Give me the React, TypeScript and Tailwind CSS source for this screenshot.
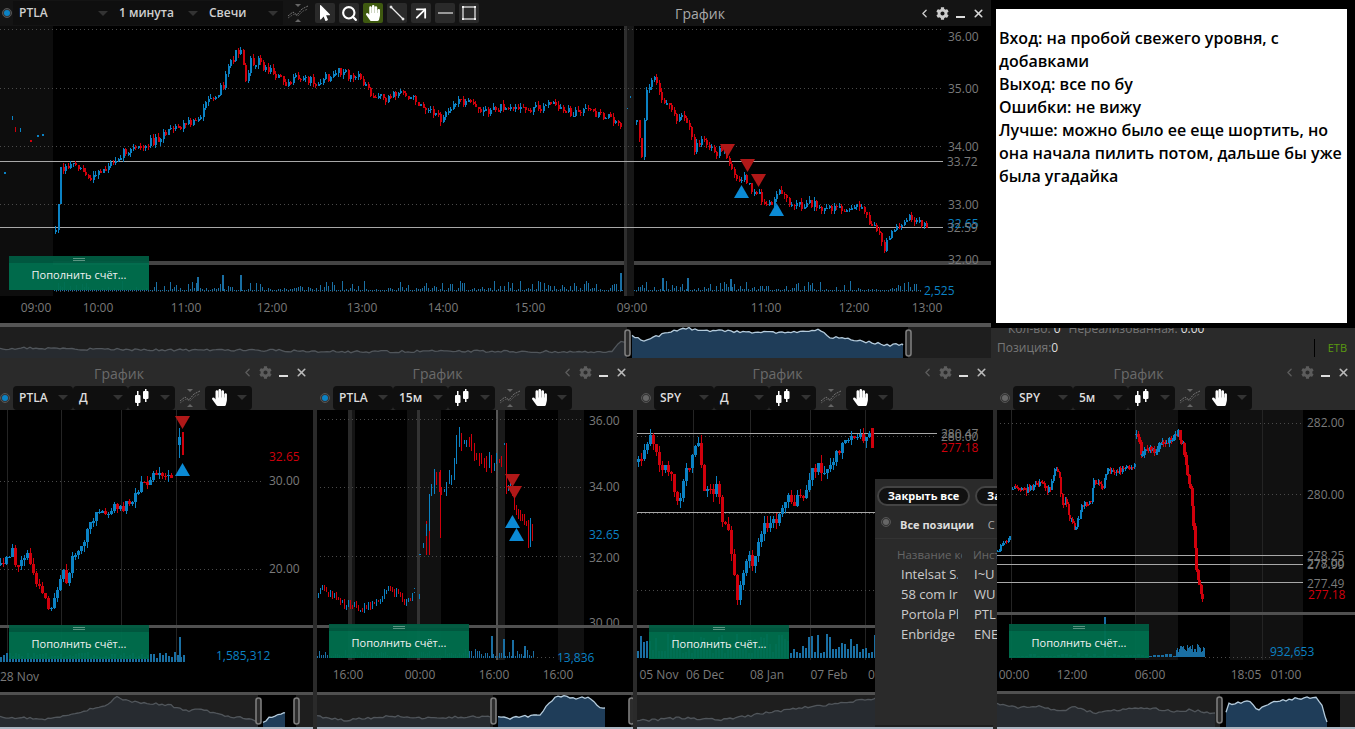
import React from 'react';
import { ArrowUpRight, ChevronLeft, Search, X } from 'lucide-react';
import { FaCog, FaHandPaper, FaMousePointer } from 'react-icons/fa';

type Pt = [number, number];

const BLUE = '#0b82c4';
const RED = '#d0000c';
const FONT = '"Open Sans", "Noto Sans", sans-serif';

function rng(seed: number) {
  let s = seed;
  return () => {
    s = (s * 1664525 + 1013904223) % 4294967296;
    return s / 4294967296;
  };
}

function interp(pts: Pt[], x: number) {
  for (let i = 1; i < pts.length; i++) {
    if (x <= pts[i][0]) {
      const [x0, y0] = pts[i - 1];
      const [x1, y1] = pts[i];
      return y0 + ((y1 - y0) * (x - x0)) / Math.max(x1 - x0, 0.01);
    }
  }
  return pts[pts.length - 1][1];
}

// roughen a navigator line so it looks like price data
function jag(pts: Pt[], seed: number): Pt[] {
  if (pts.length === 0) return pts;
  const r = rng(seed);
  const out: Pt[] = [];
  for (let x = pts[0][0]; x < pts[pts.length - 1][0]; x += 3) {
    out.push([x, interp(pts, x) + (r() - 0.5) * 2.4]);
  }
  out.push(pts[pts.length - 1]);
  return out;
}

function Candles({ pts, step, w, noise, wick, seed }: { pts: Pt[]; step: number; w: number; noise: number; wick: number; seed: number }) {
  const r = rng(seed);
  const out: React.ReactNode[] = [];
  let open = pts[0][1];
  for (let x = pts[0][0]; x <= pts[pts.length - 1][0]; x += step) {
    const close = interp(pts, x) + (r() - 0.5) * noise;
    const top = Math.min(open, close);
    const bot = Math.max(open, close);
    const hi = top - r() * wick;
    const lo = bot + r() * wick;
    const c = close < open ? BLUE : RED;
    const px = Math.round(x);
    out.push(
      <g key={x} fill={c}>
        <rect x={px} y={hi} width={1} height={lo - hi} />
        <rect x={px - Math.floor((w - 1) / 2)} y={top} width={w} height={Math.max(bot - top, 1.5)} />
      </g>
    );
    open = close;
  }
  return <g shapeRendering="crispEdges">{out}</g>;
}

function Volume({ from, to, step, base, max, seed, min = 1, pow = 2, spikes = [] }: { from: number; to: number; step: number; base: number; max: number; seed: number; min?: number; pow?: number; spikes?: Pt[] }) {
  const r = rng(seed);
  const out: React.ReactNode[] = [];
  const w = step > 1.5 ? Math.max(Math.round(step) - 1, 1) : 1;
  for (let x = from; x <= to; x += step) {
    const h = min + Math.pow(r(), pow) * max;
    out.push(<rect key={x} x={Math.round(x)} y={base - h} width={w} height={h} fill="#1a6fa3" />);
  }
  spikes.forEach(([x, h]) => out.push(<rect key={`s${x}`} x={x} y={base - h} width={2} height={h} fill="#1a6fa3" />));
  return <g shapeRendering="crispEdges">{out}</g>;
}

function Tri({ x, y, up }: { x: number; y: number; up?: boolean }) {
  const p = up ? `${x},${y} ${x + 15},${y} ${x + 7.5},${y - 13}` : `${x},${y} ${x + 15},${y} ${x + 7.5},${y + 13}`;
  return <polygon points={p} fill={up ? '#0b8ad4' : '#b01818'} />;
}

function HLine({ y, x1, x2, dotted }: { y: number; x1: number; x2: number; dotted?: boolean }) {
  return dotted ? (
    <line x1={x1} x2={x2} y1={y + 0.5} y2={y + 0.5} stroke="#4a4a4a" strokeDasharray="1 3" />
  ) : (
    <line x1={x1} x2={x2} y1={y + 0.5} y2={y + 0.5} stroke="#a8a8a8" />
  );
}

function VLines({ xs, y1, y2 }: { xs: number[]; y1: number; y2: number }) {
  return (
    <g>
      {xs.map((x) => (
        <line key={x} x1={x + 0.5} x2={x + 0.5} y1={y1} y2={y2} stroke="#242424" />
      ))}
    </g>
  );
}

function Label({ x, y, t, c = '#7a7a7a', s = 12, a }: { x: number; y: number; t: string; c?: string; s?: number; a?: 'middle' }) {
  return (
    <text x={x} y={y + 4} fill={c} fontSize={s} textAnchor={a} fontFamily={FONT}>
      {t}
    </text>
  );
}

function Plot({ left, top, width, height, spill, children }: { left: number; top: number; width: number; height: number; spill?: boolean; children: React.ReactNode }) {
  return (
    <svg width={width} height={height} viewBox={`${left} ${top} ${width} ${height}`} className={`block bg-black shrink-0 ${spill ? 'relative z-[1] overflow-visible' : ''}`}>
      {children}
    </svg>
  );
}

function Handle({ x, y, h = 26 }: { x: number; y: number; h?: number }) {
  return <rect x={x + 1} y={y} width={5} height={h} rx={2.5} fill="#2c2c2c" stroke="#7d7d7d" strokeWidth={1.6} />;
}

function Navigator({ left, top, width, height, dim, bright, handles, windowFrom, windowTo }: { left: number; top: number; width: number; height: number; dim: Pt[]; bright: Pt[]; handles: number[]; windowFrom: number; windowTo: number }) {
  const bottom = top + height;
  const d = jag(dim, left + 3);
  const b = jag(bright, left + 5);
  const str = (p: Pt[]) => p.map(([x, y]) => `${x},${y}`).join(' ');
  const area = (p: Pt[]) => (p.length ? `${p[0][0]},${bottom} ${str(p)} ${p[p.length - 1][0]},${bottom}` : '');
  return (
    <svg width={width} height={height} viewBox={`${left} ${top} ${width} ${height}`} className="block bg-[#1e1e1e] shrink-0">
      <rect x={windowFrom} y={top} width={windowTo - windowFrom} height={height} fill="#000" />
      <polygon points={area(d)} fill="#272b30" />
      <polyline points={str(d)} fill="none" stroke="#51565b" strokeWidth={1.3} />
      {b.length > 0 && <polygon points={area(b)} fill="#1f3d59" />}
      {b.length > 0 && <polyline points={str(b)} fill="none" stroke="#b4cbdc" strokeWidth={1.3} />}
      {handles.map((x) => (
        <Handle key={x} x={x} y={top + 3} />
      ))}
    </svg>
  );
}

function Caret() {
  return <span className="w-0 h-0 border-l-[5px] border-r-[5px] border-t-[5px] border-l-transparent border-r-transparent border-t-[#333333]" />;
}

function Dot({ active }: { active?: boolean }) {
  return (
    <span className="w-[10px] h-[10px] rounded-full border border-[#555555] bg-[#333333] flex items-center justify-center shrink-0">
      <span className={`w-[6px] h-[6px] rounded-full ${active ? 'bg-[#0b82c4]' : 'bg-[#666666]'}`} />
    </span>
  );
}

function CandleIcon() {
  return (
    <svg width="20" height="18" viewBox="0 0 20 18" fill="#fff">
      <rect x="3" y="2" width="1.5" height="15" />
      <rect x="1" y="6" width="5.5" height="8" rx="1" />
      <rect x="11" y="0" width="1.5" height="13" />
      <rect x="9" y="2" width="5.5" height="8" rx="1" />
    </svg>
  );
}

function TrendIcon() {
  return (
    <svg width="20" height="20" viewBox="0 0 20 20" className="shrink-0">
      <polyline points="0,13 5,9 9,12 14,6 20,3" fill="none" stroke="#777" strokeWidth="1" strokeDasharray="2 1" />
      <polyline points="0,15 6,11 10,13 15,8 20,6" fill="none" stroke="#555" strokeWidth="1" strokeDasharray="2 1" />
      <polygon points="7,1 13,1 10,4" fill="#666" />
      <polygon points="7,19 13,19 10,16" fill="#666" />
    </svg>
  );
}

function Select({ width, children }: { width: number; children: React.ReactNode }) {
  return (
    <div style={{ width }} className="h-[24px] rounded-[4px] bg-[#0f0f0f] flex items-center justify-between pl-[6px] pr-[5px] shrink-0">
      {children}
      <Caret />
    </div>
  );
}

function WindowButtons({ bright }: { bright?: boolean }) {
  const c = bright ? 'text-[#d8d8d8]' : 'text-[#bbbbbb]';
  const soft = bright ? 'text-[#cccccc]' : 'text-[#5c5c5c]';
  return (
    <div className="flex items-center pr-[3px] shrink-0">
      <span className={`w-[18px] flex justify-center ${soft}`}><ChevronLeft size={13} strokeWidth={2.5} /></span>
      <span className={`w-[18px] flex justify-center ${soft}`}><FaCog size={13} /></span>
      <span className="w-[18px] flex justify-center pt-[7px]"><span className="w-[9px] h-[2px] bg-[#dddddd]" /></span>
      <span className={`w-[18px] flex justify-center ${c}`}><X size={13} strokeWidth={3} /></span>
    </div>
  );
}

function FundButton({ top, left }: { top: number; left: number }) {
  return (
    <div style={{ top, left }} className="absolute z-[2] w-[140px] h-[34px] bg-[#00704f] opacity-95 flex flex-col">
      <div className="h-[7px] bg-[#005c42] flex flex-col items-center justify-center gap-[1px]">
        <span className="w-[12px] h-px bg-[#5f9c88]" />
        <span className="w-[12px] h-px bg-[#5f9c88]" />
      </div>
      <div className="flex-1 flex items-center justify-center text-white text-[11px] pb-[2px]">Пополнить счёт...</div>
    </div>
  );
}

function ToolButton({ children, active }: { children: React.ReactNode; active?: boolean }) {
  return <div className={`w-[20px] h-[20px] rounded-[2px] flex items-center justify-center ${active ? 'bg-[#3f5a10]' : 'bg-[#2a2a2a]'}`}>{children}</div>;
}

interface PanelProps {
  left: number;
  width: number;
  symbol: string;
  period: string;
  active?: boolean;
  padLeft: number;
  sepY: number;
  sep2Y: number;
  btnY: number;
  btnX: number;
  under: React.ReactNode;
  price: React.ReactNode;
  volume: React.ReactNode;
  nav: { dim: Pt[]; bright: Pt[]; handles: number[]; from: number; to: number };
}

function Panel({ left, width, symbol, period, active, padLeft, sepY, sep2Y, btnY, btnX, under, price, volume, nav }: PanelProps) {
  const navTop = sep2Y + 3;
  return (
    <div style={{ width }} className="shrink-0 flex flex-col bg-[#2a2a2a]">
      <div className="h-[25px] flex items-center shrink-0">
        <div className="flex-1 text-center text-[14px] pt-[2px] text-[#6a6a6a]">График</div>
        <WindowButtons />
      </div>
      <div style={{ paddingLeft: padLeft }} className="h-[25px] flex items-center shrink-0">
        <Dot active={active} />
        <div className="w-[3px]" />
        <Select width={60}><span className="text-[12px] font-semibold text-[#dddddd]">{symbol}</span></Select>
        <Select width={55}><span className="text-[12px] font-semibold text-[#dddddd]">{period}</span></Select>
        <Select width={47}><CandleIcon /></Select>
        <div className="w-[5px]" />
        <TrendIcon />
        <div className="w-[5px]" />
        <Select width={47}><FaHandPaper size={17} className="text-white" /></Select>
      </div>
      <Plot left={left} top={410} width={width} height={sepY - 410}>
        {under}
        {price}
      </Plot>
      <div className="relative shrink-0">
        <div style={{ height: 3 }} className="bg-[#505050]" />
        <Plot left={left} top={sepY + 3} width={width} height={sep2Y - sepY - 3}>
          {under}
          {volume}
        </Plot>
        <FundButton top={btnY - sepY} left={btnX - left} />
      </div>
      <div className="h-[3px] bg-[#505050] shrink-0" />
      <Navigator left={left} top={navTop} width={width} height={727 - navTop} dim={nav.dim} bright={nav.bright} handles={nav.handles} windowFrom={nav.from} windowTo={nav.to} />
      <div className="h-[2px] bg-[#aab6c2] shrink-0" />
    </div>
  );
}

const mainA: Pt[] = [[55, 232], [60, 168], [68, 165], [75, 162], [90, 180], [105, 168], [118, 155], [130, 150], [145, 145], [160, 136], [172, 130], [185, 125], [200, 115], [212, 95], [222, 88], [230, 62], [236, 52], [241, 47], [244, 80], [250, 62], [258, 60], [263, 68], [272, 72], [285, 82], [300, 78], [318, 82], [335, 72], [350, 76], [362, 80], [372, 95], [385, 98], [400, 92], [418, 102], [430, 108], [440, 120], [450, 105], [462, 100], [475, 108], [490, 112], [505, 104], [520, 110], [535, 108], [550, 105], [570, 112], [590, 112], [610, 118], [622, 124]];
const mainB: Pt[] = [[636, 122], [641, 157], [645, 95], [650, 85], [654, 78], [660, 100], [666, 100], [673, 117], [680, 117], [688, 125], [693, 150], [700, 142], [708, 147], [716, 152], [723, 152], [730, 170], [736, 178], [740, 183], [743, 172], [750, 190], [758, 195], [770, 207], [776, 195], [780, 188], [785, 200], [790, 207], [800, 206], [810, 203], [825, 210], [840, 207], [860, 208], [873, 227], [878, 235], [883, 248], [888, 238], [893, 230], [900, 224], [910, 217], [918, 224], [926, 225]];
const p1Data: Pt[] = [[0, 565], [8, 555], [12, 548], [15, 562], [20, 563], [27, 553], [31, 570], [35, 578], [40, 590], [46, 603], [50, 610], [55, 600], [60, 580], [62, 570], [67, 582], [72, 560], [77, 548], [83, 540], [90, 525], [96, 515], [102, 510], [108, 517], [115, 505], [122, 508], [130, 502], [137, 495], [142, 480], [150, 483], [155, 470], [160, 478], [165, 475], [172, 476]];
const p2A: Pt[] = [[318, 595], [322, 590], [330, 595], [340, 600], [345, 607], [350, 603], [356, 607], [362, 609], [370, 605], [378, 602], [385, 592], [395, 592], [400, 597], [405, 603], [410, 597], [414, 590]];
const p2B: Pt[] = [[426, 530], [428, 500], [433, 475], [437, 480], [440, 495], [442, 490], [447, 480], [450, 475], [453, 465], [456, 440], [459, 432], [462, 445], [468, 443], [472, 445], [475, 458], [480, 460], [488, 462], [495, 463], [501, 462]];
const p2C: Pt[] = [[504, 445], [505, 490], [510, 480], [513, 500], [517, 512], [522, 520], [526, 526], [528, 545], [530, 526], [532, 534]];
const p3Data: Pt[] = [[638, 462], [643, 457], [648, 435], [655, 452], [660, 468], [665, 468], [670, 468], [673, 493], [680, 498], [687, 468], [693, 455], [697, 437], [698, 448], [703, 485], [710, 490], [717, 488], [723, 522], [727, 525], [730, 540], [733, 568], [738, 602], [743, 572], [748, 560], [753, 562], [757, 545], [760, 538], [765, 525], [768, 522], [775, 520], [782, 508], [790, 498], [795, 502], [802, 495], [808, 482], [812, 470], [818, 467], [825, 470], [832, 462], [838, 450], [842, 447], [850, 442], [857, 435], [862, 440], [868, 438], [872, 435]];
const p4A: Pt[] = [[997, 552], [1002, 543], [1010, 537]];
const p4B: Pt[] = [[1012, 490], [1016, 487], [1025, 490], [1035, 485], [1040, 482], [1045, 490], [1050, 487], [1055, 465], [1058, 475], [1060, 495], [1062, 505], [1065, 500], [1068, 515], [1072, 522], [1074, 530], [1077, 520], [1082, 505], [1086, 503], [1090, 500], [1092, 480], [1095, 482], [1098, 483], [1100, 488], [1102, 490], [1105, 475], [1108, 470], [1112, 472], [1118, 470], [1125, 468], [1134, 466]];
const p4C: Pt[] = [[1136, 435], [1138, 440], [1141, 455], [1145, 448], [1150, 450], [1155, 452], [1160, 443], [1165, 442], [1170, 440], [1176, 435], [1178, 433], [1180, 440], [1183, 445], [1186, 470], [1190, 490], [1192, 510], [1194, 540], [1196, 570], [1198, 580], [1200, 595], [1203, 601]];

const navMainDim: Pt[] = [[0, 349], [30, 348], [80, 349], [150, 350], [250, 350], [350, 352], [450, 351], [600, 352], [612, 352], [618, 343], [627, 342]];
const navMainBright: Pt[] = [[632, 336], [640, 339], [645, 341], [655, 337], [670, 332], [685, 328], [700, 330], [730, 331], [745, 332], [790, 333], [818, 330], [830, 337], [855, 340], [880, 344], [890, 345], [900, 344], [903, 345]];
const nav1Dim: Pt[] = [[0, 717], [20, 718], [50, 719], [70, 715], [85, 710], [100, 708], [108, 705], [115, 697], [125, 700], [140, 703], [170, 705], [185, 711], [200, 709], [225, 716], [245, 718], [258, 722]];
const nav1Bright: Pt[] = [[263, 723], [270, 717], [285, 713]];
const nav2Dim: Pt[] = [[317, 716], [330, 718], [345, 720], [370, 718], [390, 716], [420, 718], [460, 717], [490, 717]];
const nav2Bright: Pt[] = [[498, 717], [510, 718], [540, 715], [548, 705], [555, 698], [562, 696], [575, 698], [590, 697], [598, 706], [605, 708]];
const nav3Dim: Pt[] = [[637, 721], [680, 718], [720, 720], [760, 714], [800, 708], [850, 702], [875, 698]];
const nav4Dim: Pt[] = [[997, 703], [1020, 708], [1040, 706], [1060, 711], [1075, 707], [1095, 713], [1120, 710], [1150, 708], [1175, 712], [1190, 710], [1215, 713]];
const nav4Bright: Pt[] = [[1226, 712], [1228, 704], [1245, 702], [1248, 700], [1257, 710], [1270, 703], [1290, 699], [1315, 697], [1322, 705], [1327, 722]];

function MainChart() {
  const under = (
    <>
      <rect x={0} y={26} width={53} height={270} fill="#0d0d0d" />
      <rect x={624} y={26} width={3} height={270} fill="#2e2e2e" />
      <rect x={627} y={26} width={7} height={270} fill="#171717" />
    </>
  );
  return (
    <div className="w-[991px] shrink-0 flex flex-col">
      <div className="h-[26px] bg-[#141414] flex items-center shrink-0">
        <div className="w-[485px] flex items-center shrink-0">
          <div className="w-[13px] flex justify-center shrink-0 pl-[1px]"><Dot active /></div>
          <div className="w-[97px] h-[24px] bg-[#0f0f0f] flex items-center justify-between pl-[6px] pr-[2px] text-[12px] font-semibold text-[#cfcfcf]">PTLA<Caret /></div>
          <div className="w-[90px] h-[24px] bg-[#0f0f0f] flex items-center justify-between pl-[9px] pr-[2px] text-[12px] font-semibold text-[#cfcfcf]">1 минута<Caret /></div>
          <div className="w-[83px] h-[24px] bg-[#0f0f0f] flex items-center justify-between pl-[9px] pr-[5px] text-[12px] font-semibold text-[#cfcfcf]">Свечи<Caret /></div>
          <div className="w-[5px]" />
          <TrendIcon />
          <div className="w-[7px]" />
          <div className="flex gap-[4px]">
            <ToolButton><FaMousePointer size={16} className="text-white" /></ToolButton>
            <ToolButton><Search size={17} strokeWidth={3} className="text-white" /></ToolButton>
            <ToolButton active><FaHandPaper size={16} className="text-white" /></ToolButton>
            <ToolButton>
              <svg width="16" height="16" viewBox="0 0 16 16" stroke="#eee" fill="#eee"><line x1="2" y1="2" x2="14" y2="14" strokeWidth="1.3" /><circle cx="2" cy="2" r="1" /><circle cx="14" cy="14" r="1" /></svg>
            </ToolButton>
            <ToolButton><ArrowUpRight size={23} strokeWidth={2.2} className="text-white" /></ToolButton>
            <ToolButton><span className="w-[15px] h-[2px] bg-[#999999]" /></ToolButton>
            <ToolButton>
              <svg width="16" height="16" viewBox="0 0 16 16" fill="#eee"><rect x="2" y="2" width="12" height="12" fill="none" stroke="#eee" strokeWidth="1.2" /><rect x="1" y="1" width="2" height="2" /><rect x="13" y="1" width="2" height="2" /><rect x="1" y="13" width="2" height="2" /><rect x="13" y="13" width="2" height="2" /></svg>
            </ToolButton>
          </div>
        </div>
        <div className="flex-1 text-center text-[14px] text-[#aaaaaa]">График</div>
        <div className="pr-[1px]"><WindowButtons bright /></div>
      </div>
      <Plot left={0} top={26} width={991} height={235} spill>
        {under}
        <HLine y={29} x1={0} x2={943} dotted />
        <HLine y={88} x1={0} x2={943} dotted />
        <HLine y={146} x1={0} x2={943} dotted />
        <HLine y={204} x1={0} x2={943} dotted />
        <HLine y={161} x1={0} x2={943} />
        <HLine y={227} x1={0} x2={943} />
        <g fill={BLUE} shapeRendering="crispEdges">
          <rect x={12} y={116} width={1} height={4} />
          <rect x={20} y={128} width={1} height={4} />
          <rect x={37} y={135} width={2} height={2} />
          <rect x={42} y={134} width={2} height={2} />
          <rect x={4} y={172} width={2} height={2} />
          <rect x={630} y={96} width={1} height={2} />
          <rect x={627} y={108} width={1} height={1} />
        </g>
        <g fill={RED} shapeRendering="crispEdges"><rect x={15} y={127} width={1} height={5} /><rect x={30} y={140} width={2} height={2} /></g>
        <Candles pts={mainA} step={2.5} w={2} noise={9} wick={4} seed={7} />
        <Candles pts={mainB} step={2.5} w={2} noise={8} wick={4} seed={19} />
        <Tri x={720} y={144} />
        <Tri x={740} y={159} />
        <Tri x={751} y={174} />
        <Tri x={734} y={198} up />
        <Tri x={769} y={216} up />
        <Label x={948} y={37} t="36.00" />
        <Label x={948} y={89} t="35.00" />
        <Label x={948} y={147} t="34.00" />
        <Label x={947} y={162} t="33.72" />
        <Label x={948} y={205} t="33.00" />
        <Label x={948} y={224} t="32.65" c={BLUE} />
        <Label x={947} y={228} t="32.59" />
        <Label x={948} y={260} t="32.00" />
      </Plot>
      <div className="relative shrink-0">
        <div className="h-[4px] bg-[#444444]" />
        <Plot left={0} top={265} width={991} height={58}>
          {under}
          <Volume from={0} to={920} step={2} base={291} max={9} pow={3.5} seed={11} spikes={[[197, 14], [222, 16], [240, 16], [620, 18], [662, 13], [687, 13], [730, 12]]} />
          <HLine y={291} x1={0} x2={924} dotted />
          <Label x={924} y={291} t="2,525" c={BLUE} />
          {[['09:00', 36], ['10:00', 98], ['11:00', 186], ['12:00', 272], ['13:00', 362], ['14:00', 443], ['15:00', 530], ['09:00', 632], ['11:00', 766], ['12:00', 854], ['13:00', 927]].map(([t, x]) => (
            <Label key={`${t}${x}`} x={x as number} y={308} t={t as string} a="middle" />
          ))}
        </Plot>
        <FundButton top={-5} left={9} />
      </div>
      <div className="h-[4px] bg-[#555555] shrink-0" />
      <Navigator left={0} top={327} width={991} height={31} dim={navMainDim} bright={navMainBright} handles={[624, 905]} windowFrom={627} windowTo={908} />
      <div className="h-[2px] bg-[#2a2a2a] shrink-0" />
    </div>
  );
}

function NotePanel() {
  return (
    <div className="flex-1 flex flex-col bg-[#2a2a2a] overflow-hidden">
      <div className="relative z-10 h-[328px] bg-black pt-[9px] pl-[5px] pr-[5px] shrink-0">
        <div className="w-[351px] h-[314px] bg-white pt-[18px] pl-[3px] text-black text-[16px] font-semibold leading-[23px] whitespace-nowrap overflow-hidden">
          <div>Вход: на пробой свежего уровня, с</div>
          <div>добавками</div>
          <div>Выход: все по бу</div>
          <div>Ошибки: не вижу</div>
          <div>Лучше: можно было ее еще шортить, но</div>
          <div>она начала пилить потом, дальше бы уже</div>
          <div>была угадайка</div>
        </div>
      </div>
      <div className="-mt-[8px] pl-[17px] h-[18px] flex gap-[8px] text-[12px] text-[#777777] shrink-0">
        <span>Кол-во: <span className="text-[#dddddd]">0</span></span>
        <span>Нереализованная: <span className="text-[#dddddd]">0.00</span></span>
      </div>
      <div className="h-[20px] flex items-center pl-[6px] pr-[8px] text-[12px] text-[#777777]">
        <span>Позиция:<span className="text-[#dddddd]">0</span></span>
        <span className="ml-auto mr-[13px] w-px h-[18px] bg-black" />
        <span className="text-[#5a9a10] text-[11px]">ETB</span>
      </div>
    </div>
  );
}

function PositionsOverlay() {
  const rows = [
    ['Intelsat S.', 'I~U'],
    ['58 com Ir', 'WU'],
    ['Portola Ph', 'PTL'],
    ['Enbridge :', 'ENE'],
  ];
  return (
    <div className="absolute z-[3] left-[875px] top-[119px] w-[122px] h-[246px] bg-[#2a2a2a] overflow-hidden flex flex-col">
      <div className="flex gap-[5px] pl-[2px] pt-[7px] whitespace-nowrap">
        <div className="w-[93px] h-[20px] shrink-0 rounded-full border-2 border-[#444444] bg-[#111111] text-white text-[11px] font-bold flex items-center justify-center">Закрыть все</div>
        <div className="w-[93px] h-[20px] shrink-0 rounded-full border-2 border-[#444444] bg-[#111111] text-white text-[11px] font-bold pl-[10px] flex items-center">Закрыть</div>
      </div>
      <div className="h-[33px] flex items-center pl-[6px] pt-[6px] border-b border-[#333333] whitespace-nowrap text-[11px]">
        <span className="-mt-[6px]"><Dot /></span>
        <span className="ml-[9px] font-bold text-[#dddddd]">Все позиции</span>
        <span className="ml-[14px] text-[#aaaaaa]">С</span>
      </div>
      <div className="flex pl-[22px] pt-[7px] h-[26px] text-[11.5px] text-[#666666] whitespace-nowrap">
        <span className="w-[65px] mr-[11px] overflow-hidden shrink-0">Название ко</span>
        <span>Инст</span>
      </div>
      {rows.map(([name, sym]) => (
        <div key={name} className="flex pl-[26px] h-[20px] items-center text-[13px] text-[#cccccc] whitespace-nowrap">
          <span className="w-[57px] mr-[16px] overflow-hidden shrink-0">{name}</span>
          <span>{sym}</span>
        </div>
      ))}
    </div>
  );
}

export default function App() {
  return (
    <div className="relative w-[1355px] h-[729px] overflow-hidden bg-[#2a2a2a] flex flex-col" style={{ fontFamily: FONT }}>
      <div className="h-[360px] flex shrink-0">
        <MainChart />
        <NotePanel />
      </div>
      <div className="relative h-[369px] flex gap-[4px] shrink-0">
        <Panel
          left={0}
          width={313}
          symbol="PTLA"
          period="Д"
          active
          padLeft={0}
          sepY={625}
          sep2Y={692}
          btnY={625}
          btnX={9}
          under={<VLines xs={[7, 61, 121, 176]} y1={410} y2={660} />}
          price={
            <>
              <HLine y={481} x1={0} x2={263} dotted />
              <HLine y={569} x1={0} x2={263} dotted />
              <Candles pts={p1Data} step={3} w={3} noise={9} wick={6} seed={5} />
              <g shapeRendering="crispEdges">
                <rect x={179} y={428} width={1} height={30} fill={BLUE} />
                <rect x={178} y={437} width={3} height={8} fill={BLUE} />
                <rect x={182} y={432} width={2} height={23} fill={RED} />
              </g>
              <Tri x={175} y={416} />
              <Tri x={175} y={476} up />
              <Label x={269} y={457} t="32.65" c={RED} />
              <Label x={269} y={481} t="30.00" />
              <Label x={269} y={569} t="20.00" />
            </>
          }
          volume={
            <>
              <Volume from={0} to={183} step={3} base={662} min={4} max={6} pow={1} seed={3} spikes={[[179, 25]]} />
              <Label x={216} y={656} t="1,585,312" c={BLUE} />
              <Label x={0} y={677} t="28 Nov" />
            </>
          }
          nav={{ dim: nav1Dim, bright: nav1Bright, handles: [255, 293], from: 258, to: 296 }}
        />
        <Panel
          left={317}
          width={316}
          symbol="PTLA"
          period="15м"
          active
          padLeft={3}
          sepY={625}
          sep2Y={692}
          btnY={624}
          btnX={329}
          under={
            <>
              <rect x={348} y={410} width={4} height={250} fill="#2a2a2a" />
              <rect x={352} y={410} width={3} height={250} fill="#151515" />
              <rect x={407} y={410} width={34} height={250} fill="#111" />
              <rect x={417} y={410} width={3} height={250} fill="#333" />
              <rect x={496} y={410} width={2} height={250} fill="#555" />
              <rect x={498} y={410} width={7} height={250} fill="#1a1a1a" />
              <rect x={558} y={410} width={26} height={250} fill="#111" />
            </>
          }
          price={
            <>
              <HLine y={419} x1={320} x2={583} dotted />
              <HLine y={487} x1={320} x2={583} dotted />
              <HLine y={556} x1={320} x2={583} dotted />
              <Candles pts={p2A} step={2} w={1} noise={7} wick={3} seed={9} />
              <g shapeRendering="crispEdges">
                <rect x={419} y={594} width={1} height={5} fill={BLUE} />
                <rect x={414} y={588} width={1} height={1} fill={BLUE} />
                <rect x={419} y={554} width={2} height={1} fill={BLUE} />
                <rect x={423} y={543} width={1} height={5} fill={BLUE} />
                <rect x={426} y={521} width={1} height={34} fill={RED} />
                <rect x={429} y={521} width={1} height={34} fill={RED} />
                <rect x={440} y={470} width={1} height={68} fill={RED} />
              </g>
              <Candles pts={p2B} step={2.5} w={1} noise={8} wick={8} seed={13} />
              <Candles pts={p2C} step={2} w={1} noise={5} wick={6} seed={31} />
              <Tri x={505} y={474} />
              <Tri x={507} y={486} />
              <Tri x={505} y={528} up />
              <Tri x={509} y={541} up />
              <Label x={589} y={421} t="36.00" />
              <Label x={589} y={487} t="34.00" />
              <Label x={589} y={535} t="32.65" c={BLUE} />
              <Label x={589} y={558} t="32.00" />
              <Label x={589} y={623} t="30.00" />
            </>
          }
          volume={
            <>
              <Volume from={317} to={533} step={2} base={658} min={2} max={7} pow={2} seed={17} spikes={[[491, 22], [503, 19], [512, 18], [524, 12]]} />
              <HLine y={657} x1={533} x2={557} dotted />
              <Label x={557} y={658} t="13,836" c={BLUE} />
              <Label x={348} y={675} t="16:00" a="middle" />
              <Label x={420} y={675} t="00:00" a="middle" />
              <Label x={494} y={675} t="16:00" a="middle" />
              <Label x={558} y={675} t="16:00" a="middle" />
            </>
          }
          nav={{ dim: nav2Dim, bright: nav2Bright, handles: [490, 628], from: 493, to: 631 }}
        />
        <Panel
          left={637}
          width={356}
          symbol="SPY"
          period="Д"
          padLeft={4}
          sepY={625}
          sep2Y={692}
          btnY={625}
          btnX={649}
          under={<VLines xs={[693, 750, 810, 865]} y1={410} y2={660} />}
          price={
            <>
              <HLine y={436} x1={637} x2={937} dotted />
              <HLine y={513} x1={637} x2={937} dotted />
              <HLine y={590} x1={637} x2={937} dotted />
              <HLine y={433} x1={637} x2={937} />
              <HLine y={512} x1={637} x2={875} />
              <Candles pts={p3Data} step={3} w={3} noise={11} wick={8} seed={23} />
              <rect x={871} y={428} width={3} height={20} fill={RED} shapeRendering="crispEdges" />
              <Label x={941} y={434} t="280.47" />
              <Label x={941} y={437} t="280.00" />
              <Label x={941} y={448} t="277.18" c={RED} />
            </>
          }
          volume={
            <>
              <Volume from={637} to={875} step={3} base={658} min={5} max={20} pow={1.6} seed={29} />
              <Label x={659} y={675} t="05 Nov" a="middle" />
              <Label x={705} y={675} t="06 Dec" a="middle" />
              <Label x={767} y={675} t="08 Jan" a="middle" />
              <Label x={829} y={675} t="07 Feb" a="middle" />
              <Label x={868} y={675} t="0" />
            </>
          }
          nav={{ dim: nav3Dim, bright: [], handles: [], from: 0, to: 0 }}
        />
        <Panel
          left={997}
          width={358}
          symbol="SPY"
          period="5м"
          padLeft={3}
          sepY={612}
          sep2Y={691}
          btnY={624}
          btnX={1009}
          under={
            <>
              <rect x={1135} y={410} width={43} height={250} fill="#111" />
              <rect x={1230} y={410} width={73} height={250} fill="#111" />
              <VLines xs={[1011, 1135, 1262]} y1={410} y2={660} />
            </>
          }
          price={
            <>
              <HLine y={423} x1={1000} x2={1303} dotted />
              <HLine y={494} x1={1000} x2={1303} dotted />
              <HLine y={555} x1={997} x2={1303} />
              <HLine y={564} x1={997} x2={1303} />
              <HLine y={582} x1={997} x2={1303} />
              <Candles pts={p4A} step={1.5} w={2} noise={5} wick={2} seed={2} />
              <Candles pts={p4B} step={1.5} w={2} noise={6} wick={3} seed={37} />
              <Candles pts={p4C} step={1.5} w={3} noise={6} wick={4} seed={41} />
              <Label x={1307} y={423} t="282.00" />
              <Label x={1307} y={495} t="280.00" />
              <Label x={1307} y={556} t="278.25" />
              <Label x={1307} y={564} t="278.00" />
              <Label x={1307} y={565} t="277.99" />
              <Label x={1307} y={584} t="277.49" />
              <Label x={1308} y={595} t="277.18" c={RED} />
            </>
          }
          volume={
            <>
              <Volume from={1009} to={1175} step={4} base={657} max={3} seed={43} spikes={[[1104, 40]]} />
              <Volume from={1176} to={1204} step={1} base={657} min={5} max={8} pow={1} seed={47} />
              <HLine y={657} x1={1205} x2={1270} dotted />
              <Label x={1270} y={652} t="932,653" c={BLUE} />
              <Label x={1014} y={675} t="00:00" a="middle" />
              <Label x={1072} y={675} t="12:00" a="middle" />
              <Label x={1150} y={675} t="06:00" a="middle" />
              <Label x={1246} y={675} t="18:05" a="middle" />
              <Label x={1286} y={675} t="01:00" a="middle" />
            </>
          }
          nav={{ dim: nav4Dim, bright: nav4Bright, handles: [1216], from: 1220, to: 1340 }}
        />
        <PositionsOverlay />
      </div>
    </div>
  );
}
